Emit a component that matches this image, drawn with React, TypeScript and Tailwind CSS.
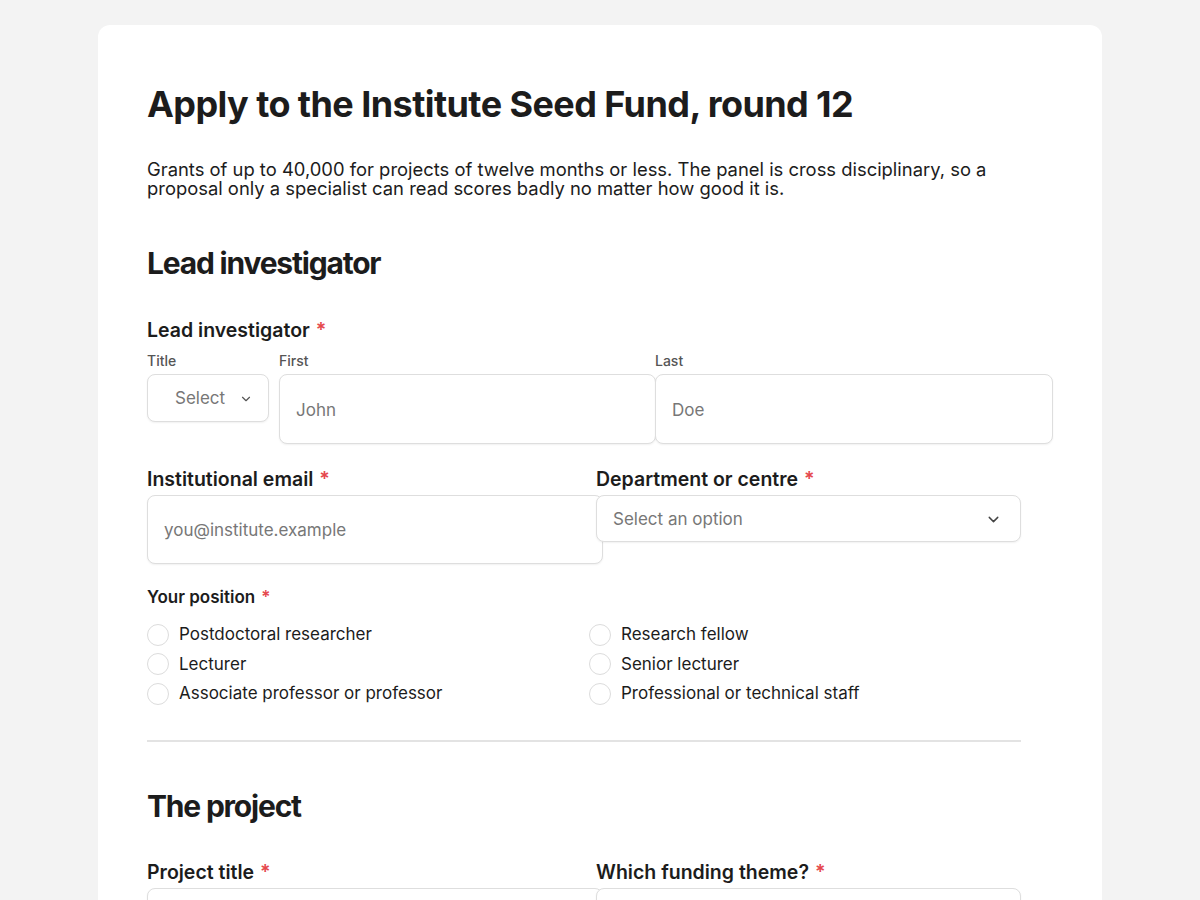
import { ChevronDown } from "lucide-react";

const positions = [
  "Postdoctoral researcher",
  "Research fellow",
  "Lecturer",
  "Senior lecturer",
  "Associate professor or professor",
  "Professional or technical staff",
];

function Req() {
  return <span className="ml-[6px] text-[#e5484d]">*</span>;
}

function FieldLabel({ children }: { children: React.ReactNode }) {
  return (
    <div className="text-[19.5px] leading-[24px] font-semibold text-[#1c1c1c]">
      {children}
      <Req />
    </div>
  );
}

const box =
  "rounded-[8px] border border-[#dedede] bg-white shadow-[0_1px_2px_rgba(0,0,0,0.06)]";

export default function App() {
  return (
    <div
      className="min-h-screen bg-[#f3f3f3] pt-[25px]"
      style={{ fontFamily: "Inter, 'Noto Sans', sans-serif" }}
    >
      <div className="mx-auto w-[1004px] rounded-t-[12px] bg-white px-[49px] pt-[57px] pb-[40px] text-[#1c1c1c]">
        <h1 className="text-[36px] leading-[44px] font-bold tracking-[-0.016em]">
          Apply to the Institute Seed Fund, round 12
        </h1>
        <p className="mt-[34px] w-[874px] text-[18.4px] leading-[19px] text-[#1c1c1c]">
          Grants of up to 40,000 for projects of twelve months or less. The panel is cross
          disciplinary, so a proposal only a specialist can read scores badly no matter how good
          it is.
        </p>

        <h2 className="mt-[47px] text-[30px] leading-[36px] font-bold tracking-[-0.04em]">
          Lead investigator
        </h2>

        <div className="mt-[37px]">
          <FieldLabel>Lead investigator</FieldLabel>
          <div className="mt-[10px] flex">
            <div className="w-[122px]">
              <div className="text-[14px] leading-[18px] font-medium text-[#555]">Title</div>
              <div
                className={`${box} mt-[4px] flex h-[48px] items-center pt-[1px] pl-[27px] text-[17px] text-[#777]`}
              >
                Select
                <ChevronDown className="ml-[14px] h-[14px] w-[14px] text-[#555]" strokeWidth={2} />
              </div>
            </div>
            <div className="ml-[10px] w-[377px]">
              <div className="text-[14px] leading-[18px] font-medium text-[#555]">First</div>
              <div
                className={`${box} mt-[4px] flex h-[70px] items-center pt-[4px] pl-[16px] text-[17px] text-[#777]`}
              >
                John
              </div>
            </div>
            <div className="-ml-[1px] w-[398px]">
              <div className="text-[14px] leading-[18px] font-medium text-[#555]">Last</div>
              <div
                className={`${box} mt-[4px] flex h-[70px] items-center pt-[4px] pl-[16px] text-[17px] text-[#777]`}
              >
                Doe
              </div>
            </div>
          </div>
        </div>

        <div className="mt-[23px] grid w-[874px] grid-cols-2 gap-x-[24px]">
          <div>
            <FieldLabel>Institutional email</FieldLabel>
            <div
              className={`${box} mt-[4px] flex h-[69px] w-[456px] items-center pt-[3px] pl-[16px] text-[17px] text-[#777]`}
            >
              you@institute.example
            </div>
          </div>
          <div className="relative z-10">
            <FieldLabel>Department or centre</FieldLabel>
            <div
              className={`${box} mt-[4px] flex h-[47px] items-center justify-between pt-[2px] pr-[18px] pl-[16px] text-[17px] text-[#777]`}
            >
              Select an option
              <ChevronDown className="h-[17px] w-[17px] text-[#444]" strokeWidth={2} />
            </div>
          </div>
        </div>

        <div className="mt-[22px]">
          <div className="text-[17px] leading-[22px] font-semibold">
            Your position
            <Req />
          </div>
          <div className="mt-[12px] grid w-[874px] grid-cols-2 gap-x-[10px]">
            {positions.map((p) => (
              <label key={p} className="flex h-[29.5px] items-center gap-[10px] text-[17px]">
                <span className="h-[22px] w-[22px] rounded-full border border-[#dcdcdc] bg-white" />
                {p}
              </label>
            ))}
          </div>
        </div>

        <div className="mt-[31px] h-[2px] w-[874px] bg-[#e3e3e3]" />

        <h2 className="mt-[46px] text-[30px] leading-[36px] font-bold tracking-[-0.04em]">
          The project
        </h2>

        <div className="mt-[36px] grid w-[874px] grid-cols-2 gap-x-[24px]">
          <div>
            <FieldLabel>Project title</FieldLabel>
            <div className={`${box} mt-[4px] h-[69px] w-[456px]`} />
          </div>
          <div className="relative z-10">
            <FieldLabel>Which funding theme?</FieldLabel>
            <div className={`${box} mt-[4px] h-[47px]`} />
          </div>
        </div>
      </div>
    </div>
  );
}
